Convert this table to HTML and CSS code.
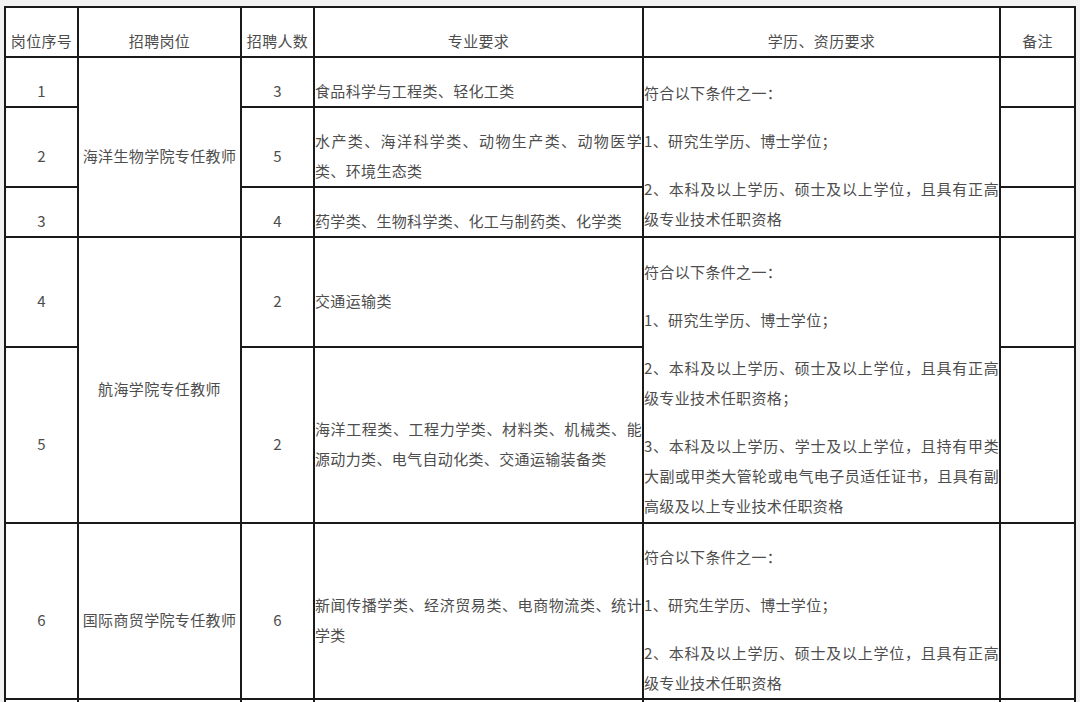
FILE: index.html
```html
<!DOCTYPE html>
<html lang="zh-CN">
<head>
<meta charset="utf-8">
<title>招聘岗位表</title>
<link rel="stylesheet" href="styles.css">
</head>
<body>
<div class="frame">
<div class="sheet">
  <div class="c ctr">岗位序号</div>
  <div class="c ctr">招聘岗位</div>
  <div class="c ctr">招聘人数</div>
  <div class="c ctr">专业要求</div>
  <div class="c ctr">学历、资历要求</div>
  <div class="c ctr">备注</div>

  <div class="c ctr">1</div>
  <div class="c ctr span3">海洋生物学院专任教师</div>
  <div class="c ctr">3</div>
  <div class="c lft"><span class="ln">食品科学与工程类、轻化工类</span></div>
  <div class="c lft span3">
    <p class="para"><span class="ln">符合以下条件之一：</span></p>
    <p class="para"><span class="ln">1、研究生学历、博士学位；</span></p>
    <p class="para"><span class="ln jl">2、本科及以上学历、硕士及以上学位，且具有正高</span><span class="ln">级专业技术任职资格</span></p>
  </div>
  <div class="c"></div>

  <div class="c ctr">2</div>
  <div class="c ctr">5</div>
  <div class="c lft"><span class="ln jl">水产类、海洋科学类、动物生产类、动物医学</span><span class="ln">类、环境生态类</span></div>
  <div class="c"></div>

  <div class="c ctr">3</div>
  <div class="c ctr">4</div>
  <div class="c lft"><span class="ln">药学类、生物科学类、化工与制药类、化学类</span></div>
  <div class="c"></div>

  <div class="c ctr">4</div>
  <div class="c ctr span2">航海学院专任教师</div>
  <div class="c ctr">2</div>
  <div class="c lft"><span class="ln">交通运输类</span></div>
  <div class="c lft span2">
    <p class="para"><span class="ln">符合以下条件之一：</span></p>
    <p class="para"><span class="ln">1、研究生学历、博士学位；</span></p>
    <p class="para"><span class="ln jl">2、本科及以上学历、硕士及以上学位，且具有正高</span><span class="ln">级专业技术任职资格；</span></p>
    <p class="para"><span class="ln jl">3、本科及以上学历、学士及以上学位，且持有甲类</span><span class="ln jl">大副或甲类大管轮或电气电子员适任证书，且具有副</span><span class="ln">高级及以上专业技术任职资格</span></p>
  </div>
  <div class="c"></div>

  <div class="c ctr">5</div>
  <div class="c ctr">2</div>
  <div class="c lft"><span class="ln jl">海洋工程类、工程力学类、材料类、机械类、能</span><span class="ln">源动力类、电气自动化类、交通运输装备类</span></div>
  <div class="c"></div>

  <div class="c ctr">6</div>
  <div class="c ctr">国际商贸学院专任教师</div>
  <div class="c ctr">6</div>
  <div class="c lft"><span class="ln jl">新闻传播学类、经济贸易类、电商物流类、统计</span><span class="ln">学类</span></div>
  <div class="c lft">
    <p class="para"><span class="ln">符合以下条件之一：</span></p>
    <p class="para"><span class="ln">1、研究生学历、博士学位；</span></p>
    <p class="para"><span class="ln jl">2、本科及以上学历、硕士及以上学位，且具有正高</span><span class="ln">级专业技术任职资格</span></p>
  </div>
  <div class="c"></div>

  <div class="c"></div>
  <div class="c"></div>
  <div class="c"></div>
  <div class="c"></div>
  <div class="c"></div>
  <div class="c"></div>
</div>
</div>
</body>
</html>
```

FILE: styles.css
```css
html, body {
  margin: 0;
  padding: 0;
  background: #f2f2f2;
  overflow: hidden;
}

body {
  padding: 6px 0 0 4px;
  font-family: "Noto Sans CJK SC", "Noto Sans", sans-serif;
  font-size: 15px;
  letter-spacing: 0.35px;
  color: #4d4d4d;
}

.frame {
  height: 696px;
  overflow: hidden;
}

.sheet {
  display: grid;
  width: 1068px;
  grid-template-columns: 71px 161px 71px 327px 355px 73px;
  grid-template-rows: 48px 48px 78px 48px 108px 174px 174px 40px;
  gap: 2px;
  padding: 2px;
  background: #1a1a1a;
}

.c {
  background: #fff;
  padding-top: 18px;
  display: flex;
  flex-direction: column;
  justify-content: center;
  line-height: 30px;
  overflow: hidden;
}

.ctr {
  align-items: center;
  text-align: center;
  white-space: nowrap;
}

.lft {
  align-items: stretch;
  text-align: left;
}

.span2 { grid-row: span 2; }
.span3 { grid-row: span 3; }

.ln {
  display: block;
  height: 30px;
}

.jl {
  text-align: justify;
  text-align-last: justify;
}

.para {
  margin: 0;
}

.para + .para {
  margin-top: 18px;
}
```
